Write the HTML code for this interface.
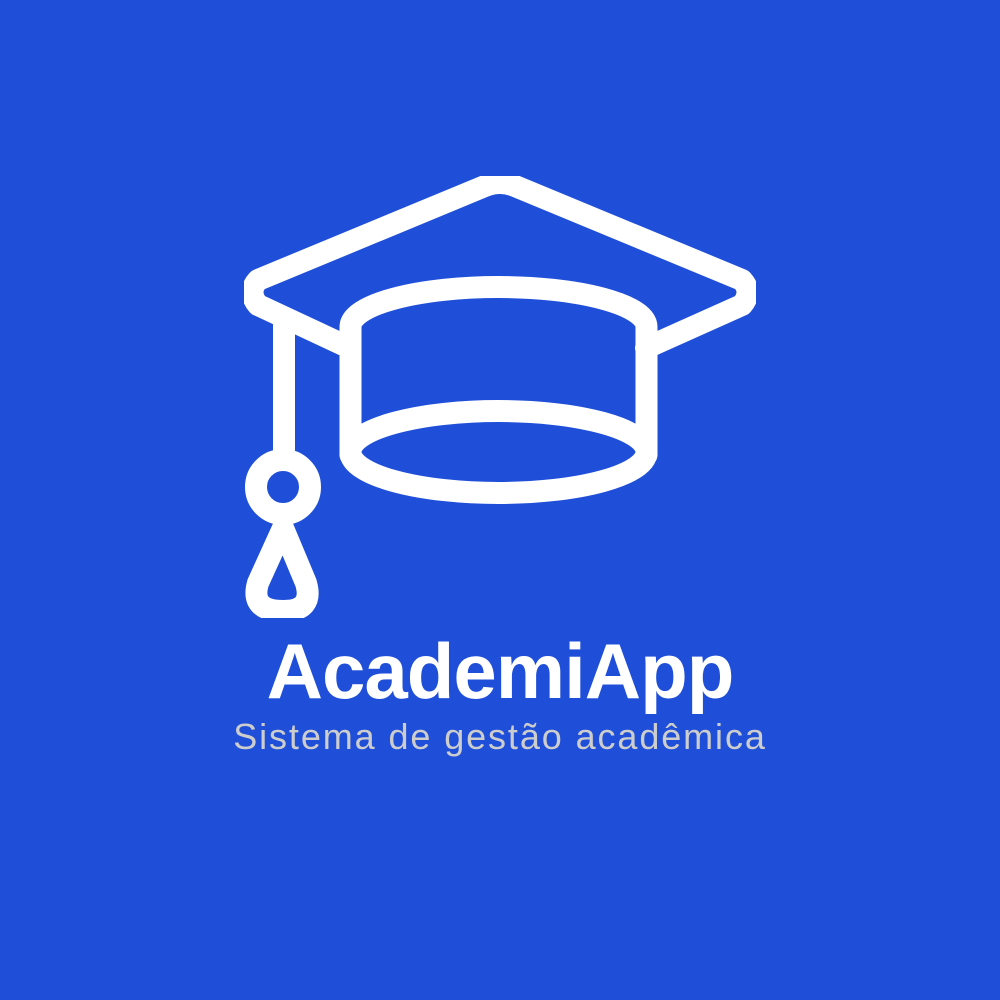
<!DOCTYPE html>
<html><head><meta charset="utf-8"><style>
html,body{margin:0;padding:0;width:1000px;height:1000px;background:#1f4fd8;overflow:hidden}
svg{position:absolute;left:0;top:0}
.t{position:absolute;left:0;width:1000px;text-align:center;font-family:"Liberation Sans",sans-serif}
#a{top:626px;font-size:78px;font-weight:bold;color:#fff;letter-spacing:-1px;line-height:90px}
#b{top:715px;font-size:36px;color:#cdcdcd;line-height:44px;letter-spacing:1.9px}
</style></head><body>
<svg width="1000" height="1000">
<defs><clipPath id="c"><rect x="244" y="176" width="512" height="442"/></clipPath></defs>
<g clip-path="url(#c)" fill="none" stroke="#fff" stroke-width="22" stroke-linejoin="round" stroke-linecap="round">
<path d="M350,348 L258,305 Q247,292 258,280 L485,186 Q500,180 515,186 L742,280 Q753,292 742,305 L646,348"/>
<path d="M350.5,455 L350.5,327 A148,40 0 0 1 646.5,327 L646.5,455"/>
<ellipse cx="498.5" cy="452" rx="148" ry="41"/>
<line x1="284" y1="318" x2="284" y2="460"/>
<circle cx="283" cy="487" r="27"/>
<path d="M283,528 L258,583 Q250,611 283,611 Q314,611 306,583 Z"/>
</g>
</svg>
<div class="t" id="a">AcademiApp</div>
<div class="t" id="b">Sistema de gestão acadêmica</div>
</body></html>
